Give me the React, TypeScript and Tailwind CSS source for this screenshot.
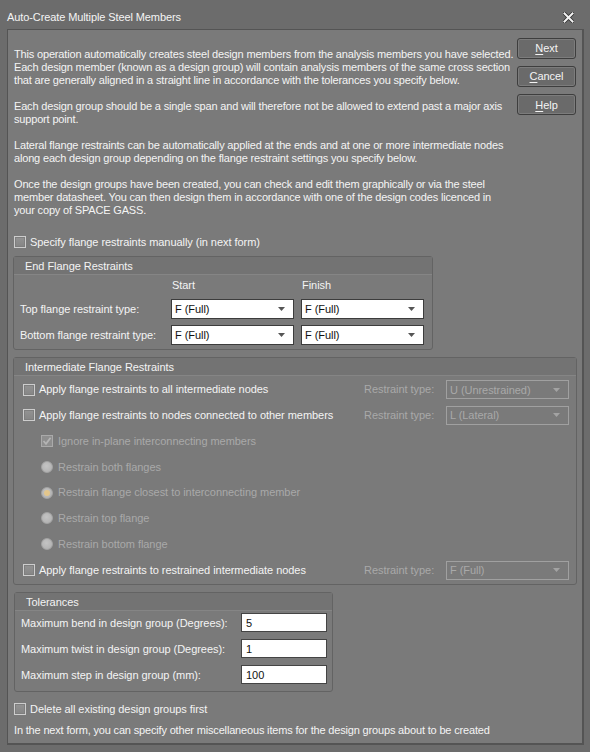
import React from "react";

const DIS = "text-[#a9a9a9]";

function Check({ checked = false, disabled = false }: { checked?: boolean; disabled?: boolean }) {
  return (
    <span
      className={
        "relative w-[12px] h-[12px] shrink-0 border flex items-center justify-center " +
        (disabled
          ? "border-[#aaaaaa] bg-[#8e8e8e]"
          : "border-[#cdcdcd] bg-gradient-to-b from-[#939393] to-[#858585] shadow-[inset_0_0_0_1px_#7e7e7e]")
      }
    >
      {checked && (
        <svg width="10" height="10" viewBox="0 0 10 10">
          <path d="M1.5 5 L4 7.8 L8.6 1.8" stroke={disabled ? "#b4b4b4" : "#ffffff"} strokeWidth="1.8" fill="none" />
        </svg>
      )}
    </span>
  );
}

function Radio({ checked = false }: { checked?: boolean }) {
  return (
    <span className="w-[12px] h-[12px] shrink-0 rounded-full border border-[#a3a3a3] bg-[radial-gradient(circle_at_45%_40%,#c4c4c4,#adadad)] flex items-center justify-center">
      {checked && <span className="w-[6px] h-[6px] rounded-full bg-[#e3c68c]" />}
    </span>
  );
}

function Arrow({ disabled = false }: { disabled?: boolean }) {
  return (
    <svg width="7" height="4" viewBox="0 0 7 4" className="shrink-0">
      <path d="M0 0 H7 L3.5 4 Z" fill={disabled ? "#a3a3a3" : "#555555"} />
    </svg>
  );
}

function Select({ value, disabled = false, h = "h-[20px]" }: { value: string; disabled?: boolean; h?: string }) {
  return (
    <div
      className={
        "w-[123px] " + h + " border flex items-center justify-between pl-[3px] pr-[8px] shrink-0 " +
        (disabled ? "border-[#a0a0a0] text-[#a9a9a9]" : "border-[#3c3c3c] bg-white text-[#111111]")
      }
    >
      <span className="leading-[14px]">{value}</span>
      <Arrow disabled={disabled} />
    </div>
  );
}

function Input({ value }: { value: string }) {
  return (
    <div className="w-[86px] h-[19px] border border-[#444444] bg-white text-[#111111] flex items-center pl-[4px] shrink-0">
      {value}
    </div>
  );
}

function Group({
  title,
  className,
  children,
}: {
  title: string;
  className: string;
  children: React.ReactNode;
}) {
  return (
    <div className={"border border-[#636363] rounded-[3px] flex flex-col " + className}>
      <div className="h-[18px] shrink-0 bg-[#737373] border-b border-[#858585] pl-[11px] flex items-center leading-[14px]">
        {title}
      </div>
      {children}
    </div>
  );
}

function Btn({ label, u }: { label: string; u: number }) {
  return (
    <div className="w-[59px] h-[21px] rounded-[3px] border border-[#3e3e3e] bg-[#6a6a6a] shadow-[inset_0_0_0_1px_#7c7c7c] flex items-center justify-center leading-[14px]">
      <span>
        {label.slice(0, u)}
        <span className="underline underline-offset-[2px]">{label[u]}</span>
        {label.slice(u + 1)}
      </span>
    </div>
  );
}

function IRow({
  children,
  rt,
  rv,
}: {
  children: React.ReactNode;
  rt?: boolean;
  rv?: string;
}) {
  return (
    <div className="h-[20px] flex items-center">
      <div className="w-[350px] flex items-center">{children}</div>
      {rt && (
        <>
          <span className={"w-[82px] " + DIS}>Restraint type:</span>
          <Select value={rv || ""} disabled h="h-[19px]" />
        </>
      )}
    </div>
  );
}

export default function App() {
  const lines = [
    "This operation automatically creates steel design members from the analysis members you have selected.",
    "Each design member (known as a design group) will contain analysis members of the same cross section",
    "that are generally aligned in a straight line in accordance with the tolerances you specify below.",
    "",
    "Each design group should be a single span and will therefore not be allowed to extend past a major axis",
    "support point.",
    "",
    "Lateral flange restraints can be automatically applied at the ends and at one or more intermediate nodes",
    "along each design group depending on the flange restraint settings you specify below.",
    "",
    "Once the design groups have been created, you can check and edit them graphically or via the steel",
    "member datasheet. You can then design them in accordance with one of the design codes licenced in",
    "your copy of SPACE GASS.",
  ];
  return (
    <div className="w-[590px] h-[752px] bg-[#6c6c6c] flex flex-col overflow-hidden text-[#f4f4f4] text-[11px] tracking-[-0.05px] font-['Liberation_Sans',Arial,sans-serif]">
      <div className="h-[29px] shrink-0 flex items-start justify-between pl-[7px] pr-[16px] pt-[9px]">
        <span className="text-[11px] leading-[16px] tracking-[-0.1px]">Auto-Create Multiple Steel Members</span>
        <svg width="11" height="11" viewBox="0 0 11 11" className="mt-[3px]">
          <path d="M1.5 1.5 L9.5 9.5 M9.5 1.5 L1.5 9.5" stroke="#2e2e2e" strokeWidth="3.6" strokeLinecap="square" />
          <path d="M1.5 1.5 L9.5 9.5 M9.5 1.5 L1.5 9.5" stroke="#f2f2f2" strokeWidth="2" strokeLinecap="square" />
        </svg>
      </div>
      <div className="ml-[7px] w-[577px] h-[716px] shrink-0 border-t border-l border-r-2 border-b-2 border-[#545454] bg-[#7a7a7a] flex flex-col">
        <div className="flex items-start h-[186.5px] shrink-0">
          <div className="ml-[6px] mt-[17.5px] w-[500px] leading-[13px] whitespace-nowrap tracking-[-0.17px]">
            {lines.map((l, i) => (
              <div key={i} className="h-[13px]">
                {l}
              </div>
            ))}
          </div>
          <div className="ml-auto mr-[6px] mt-[7.7px] flex flex-col gap-[7.3px]">
            <Btn label="Next" u={0} />
            <Btn label="Cancel" u={0} />
            <Btn label="Help" u={0} />
          </div>
        </div>

        <div className="mt-[17.5px] h-[16px] ml-[6px] flex items-center gap-[4px]">
          <Check />
          <span>Specify flange restraints manually (in next form)</span>
        </div>

        <Group title="End Flange Restraints" className="mt-[6px] ml-[5px] w-[420px] h-[94px]">
          <div className="grid grid-cols-[144px_123px_123px] gap-x-[7px] ml-[6px] mt-[3px]">
            <span />
            <span className="pl-[1px] h-[14px] leading-[14px]">Start</span>
            <span className="pl-[1px] h-[14px] leading-[14px]">Finish</span>
          </div>
          <div className="grid grid-cols-[144px_123px_123px] gap-x-[7px] gap-y-[6px] ml-[6px] mt-[7px] items-center">
            <span className="whitespace-nowrap">Top flange restraint type:</span>
            <Select value="F (Full)" />
            <Select value="F (Full)" />
            <span className="whitespace-nowrap">Bottom flange restraint type:</span>
            <Select value="F (Full)" />
            <Select value="F (Full)" />
          </div>
        </Group>

        <Group title="Intermediate Flange Restraints" className="mt-[7px] ml-[5px] w-[564px] h-[228px]">
          <div className="flex flex-col gap-[5.8px] mt-[3.5px]">
            <IRow rt rv="U (Unrestrained)">
              <span className="ml-[9px] flex items-center gap-[4px]">
                <Check />
                <span>Apply flange restraints to all intermediate nodes</span>
              </span>
            </IRow>
            <IRow rt rv="L (Lateral)">
              <span className="ml-[9px] flex items-center gap-[4px]">
                <Check />
                <span>Apply flange restraints to nodes connected to other members</span>
              </span>
            </IRow>
            <IRow>
              <span className={"ml-[27px] flex items-center gap-[5px] " + DIS}>
                <Check checked disabled />
                <span>Ignore in-plane interconnecting members</span>
              </span>
            </IRow>
            <IRow>
              <span className={"ml-[27px] flex items-center gap-[5px] " + DIS}>
                <Radio />
                <span>Restrain both flanges</span>
              </span>
            </IRow>
            <IRow>
              <span className={"ml-[27px] flex items-center gap-[5px] " + DIS}>
                <Radio checked />
                <span>Restrain flange closest to interconnecting member</span>
              </span>
            </IRow>
            <IRow>
              <span className={"ml-[27px] flex items-center gap-[5px] " + DIS}>
                <Radio />
                <span>Restrain top flange</span>
              </span>
            </IRow>
            <IRow>
              <span className={"ml-[27px] flex items-center gap-[5px] " + DIS}>
                <Radio />
                <span>Restrain bottom flange</span>
              </span>
            </IRow>
            <IRow rt rv="F (Full)">
              <span className="ml-[9px] flex items-center gap-[4px]">
                <Check />
                <span>Apply flange restraints to restrained intermediate nodes</span>
              </span>
            </IRow>
          </div>
        </Group>

        <Group title="Tolerances" className="mt-[7px] ml-[6px] w-[319px] h-[100px]">
          <div className="flex flex-col gap-[7px] mt-[2.3px] ml-[6px]">
            <div className="flex items-center">
              <span className="w-[220px]">Maximum bend in design group (Degrees):</span>
              <Input value="5" />
            </div>
            <div className="flex items-center">
              <span className="w-[220px]">Maximum twist in design group (Degrees):</span>
              <Input value="1" />
            </div>
            <div className="flex items-center">
              <span className="w-[220px]">Maximum step in design group (mm):</span>
              <Input value="100" />
            </div>
          </div>
        </Group>

        <div className="mt-[9.3px] h-[16px] ml-[6px] flex items-center gap-[4px]">
          <Check />
          <span>Delete all existing design groups first</span>
        </div>
        <div className="mt-[5.7px] h-[14px] ml-[6px] leading-[14px] whitespace-nowrap tracking-[-0.17px]">
          In the next form, you can specify other miscellaneous items for the design groups about to be created
        </div>
      </div>
    </div>
  );
}
